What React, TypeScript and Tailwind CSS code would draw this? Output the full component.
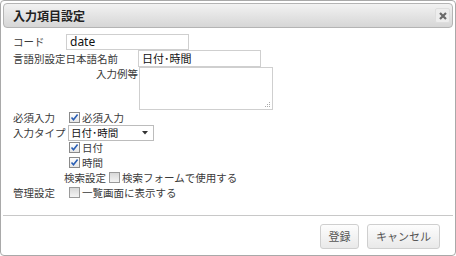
const font = { fontFamily: '"Noto Sans CJK JP", "Noto Sans", sans-serif' };

const Check = ({ checked }: { checked: boolean }) => (
  <span
    className={
      "inline-flex items-center justify-center w-[11px] h-[11px] border shrink-0 " +
      (checked ? "border-[#8a8a8a] bg-gradient-to-b from-[#ffffff] to-[#e6e6e6]" : "border-[#9a9a9a] bg-gradient-to-b from-[#d8d8d8] to-[#f4f4f4]")
    }
  >
    {checked && (
      <svg width="9" height="9" viewBox="0 0 9 9">
        <path d="M1.5 4.5 L3.5 6.8 L7.6 1.6" fill="none" stroke="#2b5fb4" strokeWidth="1.6" />
      </svg>
    )}
  </span>
);

const Row = ({ label, children }: { label?: string; children?: React.ReactNode }) => (
  <div className="flex items-center h-[15px]">
    <div className="w-[56px] shrink-0 whitespace-nowrap">{label}</div>
    {children}
  </div>
);

export default function App() {
  return (
    <div className="w-[456px] h-[256px] bg-white text-[10.5px] text-[#3a3a3a]" style={font}>
      <div className="w-full h-full border border-[#a9a9a9] rounded-[4px] p-[2px] flex flex-col">
        {/* title bar */}
        <div className="h-[25px] border border-[#b4b4b4] rounded-[4px] bg-gradient-to-b from-[#f2f2f2] to-[#d6d6d6] flex items-center justify-between pl-[9px] pr-[2px]">
          <span className="font-bold text-[12px] text-[#222]">入力項目設定</span>
          <span className="w-[15px] h-[15px] rounded-[2px] bg-[#ededed] border border-[#dedede] flex items-center justify-center">
            <svg width="8" height="8" viewBox="0 0 8 8">
              <path d="M1 1 L7 7 M7 1 L1 7" stroke="#6a6a6a" strokeWidth="2.2" />
            </svg>
          </span>
        </div>

        {/* body */}
        <div className="flex flex-col pl-[10px] pt-[5px] h-[183px]">
          <div className="flex items-center h-[17px]">
            <div className="w-[53px] shrink-0">コード</div>
            <div className="w-[123px] h-[16px] border border-[#cfcfcf] flex items-center px-[3px] text-[12px] text-[#111]" style={{ fontFamily: '"Noto Sans", sans-serif' }}>
              date
            </div>
          </div>
          <div className="flex items-center h-[17px]">
            <div className="w-[125px] shrink-0 whitespace-nowrap">言語別設定日本語名前</div>
            <div className="w-[123px] h-[17px] border border-[#cfcfcf] flex items-center px-[3px] text-[11px] text-[#111]">日付･時間</div>
          </div>
          <div className="flex items-start h-[43px]">
            <div className="w-[126px] shrink-0 text-right pr-[1px] leading-[14px]">入力例等</div>
            <div className="w-[134px] h-[43px] border border-[#cfcfcf] relative">
              <svg className="absolute right-[1px] bottom-[1px]" width="6" height="6" viewBox="0 0 6 6">
                <rect x="4" y="0" width="1" height="1" fill="#aaa" />
                <rect x="2" y="2" width="1" height="1" fill="#aaa" />
                <rect x="4" y="2" width="1" height="1" fill="#aaa" />
                <rect x="0" y="4" width="1" height="1" fill="#aaa" />
                <rect x="2" y="4" width="1" height="1" fill="#aaa" />
                <rect x="4" y="4" width="1" height="1" fill="#aaa" />
              </svg>
            </div>
          </div>
          <Row label="必須入力">
            <Check checked />
            <span className="ml-[2px]">必須入力</span>
          </Row>
          <Row label="入力タイプ">
            <div className="w-[86px] h-[16px] -ml-[1px] border border-[#bcbcbc] flex items-center justify-between pl-[2px] pr-[5px] text-[#111]">
              <span>日付･時間</span>
              <svg width="6" height="4" viewBox="0 0 6 4">
                <path d="M0 0 L6 0 L3 3.5 Z" fill="#333" />
              </svg>
            </div>
          </Row>
          <Row>
            <Check checked />
            <span className="ml-[2px]">日付</span>
          </Row>
          <Row>
            <Check checked />
            <span className="ml-[2px]">時間</span>
          </Row>
          <div className="flex items-center h-[15px]">
            <div className="w-[96px] shrink-0 text-right pr-[3px]">検索設定</div>
            <Check checked={false} />
            <span className="ml-[2px]">検索フォームで使用する</span>
          </div>
          <Row label="管理設定">
            <Check checked={false} />
            <span className="ml-[2px]">一覧画面に表示する</span>
          </Row>
        </div>

        <div className="h-[1px] bg-[#c8c8c8] mt-[4px]" />

        {/* footer */}
        <div className="flex justify-end gap-[8px] pr-[13px] pt-[8px]">
          <button className="w-[39px] h-[25px] border border-[#cfcfcf] rounded-[3px] bg-gradient-to-b from-[#fdfdfd] to-[#e9e9e9] text-[#555] text-[11px]">
            登録
          </button>
          <button className="w-[73px] h-[25px] border border-[#cfcfcf] rounded-[3px] bg-gradient-to-b from-[#fdfdfd] to-[#e9e9e9] text-[#555] text-[11px]">
            キャンセル
          </button>
        </div>
      </div>
    </div>
  );
}
